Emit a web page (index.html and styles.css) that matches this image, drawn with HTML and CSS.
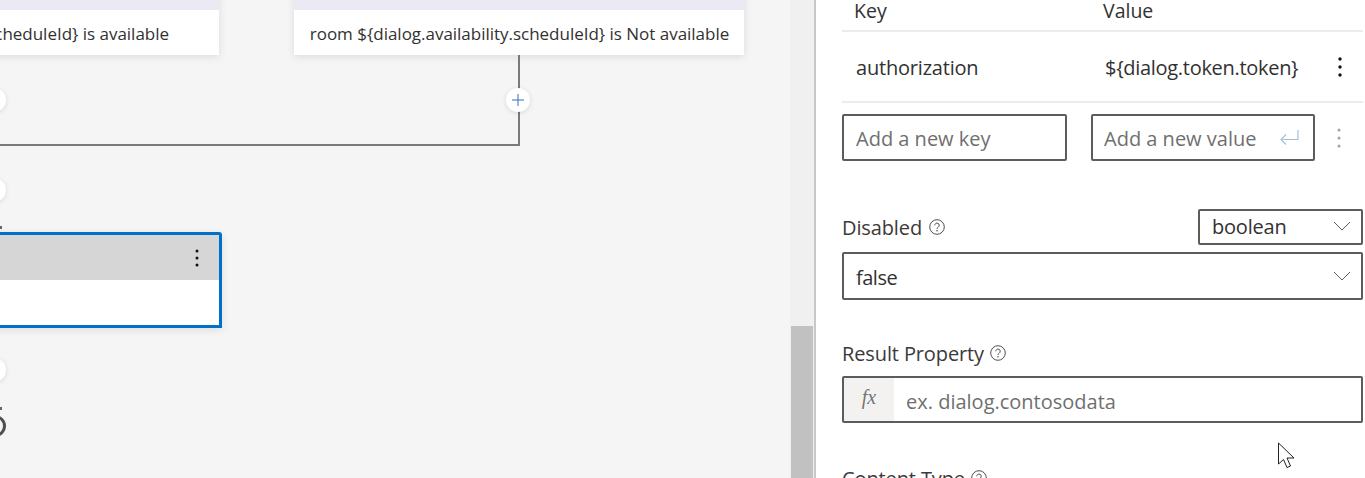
FILE: index.html
```html
<!DOCTYPE html>
<html lang="en">
<head>
<meta charset="utf-8">
<title>Dialog editor</title>
<link rel="stylesheet" href="styles.css">
</head>
<body>
<div class="app">
  <div class="canvas">
    <div class="node node-left"><div class="node-head"></div><div class="node-body node-body-left">room ${dialog.availability.scheduleId} is available</div></div>
    <div class="node node-right"><div class="node-head"></div><div class="node-body">room ${dialog.availability.scheduleId} is Not available</div></div>
    <div class="wire wire-v"></div>
    <div class="wire wire-h"></div>
    <div class="dot dot-a"></div>
    <div class="dot dot-b"></div>
    <div class="dot dot-c"></div>
    <button class="dot dot-plus"><svg width="14" height="14" viewBox="0 0 14 14"><path d="M7 1v12M1 7h12" stroke="#2f72c0" stroke-width="1" fill="none"/></svg></button>
    <div class="selected">
      <div class="selected-head"><svg width="4" height="18" viewBox="0 0 4 18"><circle cx="2" cy="2" r="1.5"/><circle cx="2" cy="9" r="1.5"/><circle cx="2" cy="16" r="1.5"/></svg></div>
      <div class="selected-body"></div>
    </div>
    <div class="end-ring"></div>
    <div class="tick tick-a"></div>
    <div class="tick tick-b"></div>
    <div class="scrollbar"><div class="thumb"></div></div>
  </div>
  <aside class="panel">
    <div class="kv-head"><span class="kv-key">Key</span><span class="kv-val">Value</span></div>
    <div class="kv-row">
      <span class="kv-key2">authorization</span><span class="kv-val2">${dialog.token.token}</span>
      <svg class="more" width="4" height="20" viewBox="0 0 4 20"><circle cx="2" cy="2" r="1.7"/><circle cx="2" cy="10" r="1.7"/><circle cx="2" cy="18" r="1.7"/></svg>
    </div>
    <div class="kv-add">
      <div class="box box-key"><span class="ph">Add a new key</span></div>
      <div class="box box-val"><span class="ph">Add a new value</span>
        <svg class="enter" width="20" height="16" viewBox="0 0 20 16"><path d="M19 1v9.5H2M7 5.5l-5 5 5 5" fill="none" stroke="#a6c0d8" stroke-width="1.2"/></svg>
      </div>
      <svg class="more faint" width="4" height="20" viewBox="0 0 4 20"><circle cx="2" cy="2" r="1.6"/><circle cx="2" cy="10" r="1.6"/><circle cx="2" cy="18" r="1.6"/></svg>
    </div>
    <div class="field-head field-disabled">
      <label class="label">Disabled<svg class="help" width="16" height="16" viewBox="0 0 16 16"><circle cx="8" cy="8" r="7.3" fill="none" stroke="#505050" stroke-width="1"/><path d="M5.8 6.3a2.2 2.2 0 1 1 3.4 1.8c-.8.5-1.2 1-1.2 1.8" fill="none" stroke="#505050"/><circle cx="8" cy="11.8" r=".8" fill="#505050"/></svg></label>
      <div class="box box-type"><span>boolean</span><svg class="chev" width="18" height="10" viewBox="0 0 18 10"><path d="M1 1l8 8 8-8" fill="none" stroke="#606060"/></svg></div>
    </div>
    <div class="box box-false"><span class="false-text">false</span><svg class="chev" width="18" height="10" viewBox="0 0 18 10"><path d="M1 1l8 8 8-8" fill="none" stroke="#606060"/></svg></div>
    <label class="label label-result">Result Property<svg class="help" width="16" height="16" viewBox="0 0 16 16"><circle cx="8" cy="8" r="7.3" fill="none" stroke="#505050" stroke-width="1"/><path d="M5.8 6.3a2.2 2.2 0 1 1 3.4 1.8c-.8.5-1.2 1-1.2 1.8" fill="none" stroke="#505050"/><circle cx="8" cy="11.8" r=".8" fill="#505050"/></svg></label>
    <div class="box box-result"><span class="fx">fx</span><span class="ph ph-result">ex. dialog.contosodata</span></div>
    <label class="label label-content">Content Type<svg class="help" width="16" height="16" viewBox="0 0 16 16"><circle cx="8" cy="8" r="7.3" fill="none" stroke="#505050" stroke-width="1"/><path d="M5.8 6.3a2.2 2.2 0 1 1 3.4 1.8c-.8.5-1.2 1-1.2 1.8" fill="none" stroke="#505050"/><circle cx="8" cy="11.8" r=".8" fill="#505050"/></svg></label>
  </aside>
</div>
<svg class="cursor" width="20" height="28" viewBox="0 0 20 28"><path d="M1.5 1v21l5-4.5 3.5 8 3.5-1.5-3.5-8h7z" fill="#fff" stroke="#222" stroke-width="1"/></svg>
</body>
</html>
```
FILE: styles.css
```css
* { box-sizing: border-box; }
html, body { margin: 0; height: 100%; overflow: hidden; background: #fff; }
body { font-family: "Open Sans", "Noto Sans", sans-serif; color: #323130; }
.app { display: flex; width: 1365px; height: 478px; overflow: hidden; }

.canvas { position: relative; flex: 0 0 814px; background: #f5f5f5; overflow: hidden; }
.node { position: absolute; top: -20px; width: 450px; box-shadow: 0 2px 8px rgba(0,0,0,.1); }
.node-left { left: -231px; }
.node-right { left: 294px; }
.node-head { height: 30px; background: #ebe9f3; }
.node-body { height: 45px; padding-top: 2px; padding-left: 1px; background: #fff; display: flex; align-items: center; justify-content: center; font-size: 17px; letter-spacing: -.02px; white-space: nowrap; }
.node-body-left { justify-content: flex-end; padding-right: 50px; }
.wire { position: absolute; background: #7a7a7a; }
.wire-v { left: 518px; top: 55px; width: 2px; height: 91px; }
.wire-h { left: 0; top: 144px; width: 520px; height: 2px; border-bottom-right-radius: 1px; }
.dot { position: absolute; width: 24px; height: 24px; border: 0; padding: 0; border-radius: 50%; background: #fff; box-shadow: 0 1px 5px rgba(0,0,0,.12); display: flex; align-items: center; justify-content: center; }
.dot-a { left: -18px; top: 88px; }
.dot-b { left: -18px; top: 178px; }
.dot-c { left: -18px; top: 358px; }
.dot-plus { left: 506px; top: 88px; }
.selected { position: absolute; left: -230px; top: 232px; width: 452px; height: 96px; border: 3px solid #0070c9; border-top-right-radius: 3px; box-shadow: 0 2px 8px rgba(0,0,0,.1); background: #fff; }
.selected-head { height: 45px; background: #d6d6d6; display: flex; align-items: center; justify-content: flex-end; padding-right: 20px; }
.selected-head svg { fill: #111; }
.end-ring { position: absolute; left: -16px; top: 415px; width: 22px; height: 22px; border: 3px solid #505050; border-radius: 50%; }
.tick { position: absolute; left: 0; width: 2px; height: 3px; background: #666; }
.tick-a { top: 226px; }
.tick-b { top: 407px; }
.scrollbar { position: absolute; left: 790px; top: 0; bottom: 0; width: 24px; background: #f0f0f0; display: flex; flex-direction: column; justify-content: flex-end; }
.thumb { height: 152px; margin-left: 1px; width: 22px; background: #c1c1c1; }

.panel { flex: 1; border-left: 2px solid #c8c8c8; padding-left: 26px; padding-right: 2px; font-size: 20px; overflow: hidden; min-width: 0; }
.kv-head { height: 32px; padding-bottom: 8px; border-bottom: 2px solid #ececec; display: flex; align-items: center; line-height: 1; font-size: 19.5px; }
.kv-key { margin-left: 12px; width: 249px; }
.kv-row { height: 71px; display: flex; align-items: center; border-bottom: 2px solid #ececec; font-size: 20px; letter-spacing: -.2px; white-space: nowrap; }
.kv-key2 { margin-left: 14px; width: 249px; padding-top: 2px; }
.kv-val2 { letter-spacing: -.3px; width: 233px; padding-top: 2px; }
.more { fill: #111; flex: none; margin-left: 29px; }
.kv-row .more { margin-left: 0; }
.faint { fill: #a6a6a6; margin-left: 22px; }
.kv-add { display: flex; margin-top: 11px; align-items: center; }
.box { border: 2px solid #5c5c5c; border-radius: 2px; background: #fff; display: flex; align-items: center; height: 47px; padding-left: 12px; white-space: nowrap; letter-spacing: -.2px; }
.box-key { width: 225px; padding-top: 2px; }
.box-val { width: 224px; margin-left: 24px; position: relative; justify-content: space-between; padding-left: 11px; padding-right: 14px; padding-top: 2px; }
.enter { margin-bottom: 3px; }
.ph { color: #6f6f6f; letter-spacing: 0; }
.field-head { display: flex; justify-content: space-between; align-items: center; }
.field-disabled { margin-top: 48px; height: 36px; }
.label { display: flex; align-items: center; gap: 7px; letter-spacing: -.12px; white-space: nowrap; color: #3b3a39; }
.box-type { width: 165px; height: 36px; padding-right: 10px; justify-content: space-between; padding-bottom: 2px; }
.box-false { margin-top: 7px; height: 48px; width: 521px; padding-right: 10px; justify-content: space-between; letter-spacing: -.5px; }
.false-text { padding-top: 3px; }
.label-result { margin-top: 39px; height: 28px; }
.box-result { margin-top: 9px; width: 521px; padding-left: 0; overflow: hidden; }
.fx { flex: none; width: 50px; height: 100%; background: #f3f2f1; display: flex; align-items: center; justify-content: center; font-family: "Liberation Serif", serif; font-style: italic; color: #767676; letter-spacing: 0; padding-bottom: 4px; }
.ph-result { margin-left: 12px; padding-top: 3px; }
.label-result, .label-content { gap: 6px; }
.label-content { margin-top: 41px; height: 28px; }
.cursor { position: absolute; left: 1277px; top: 442px; }
```
